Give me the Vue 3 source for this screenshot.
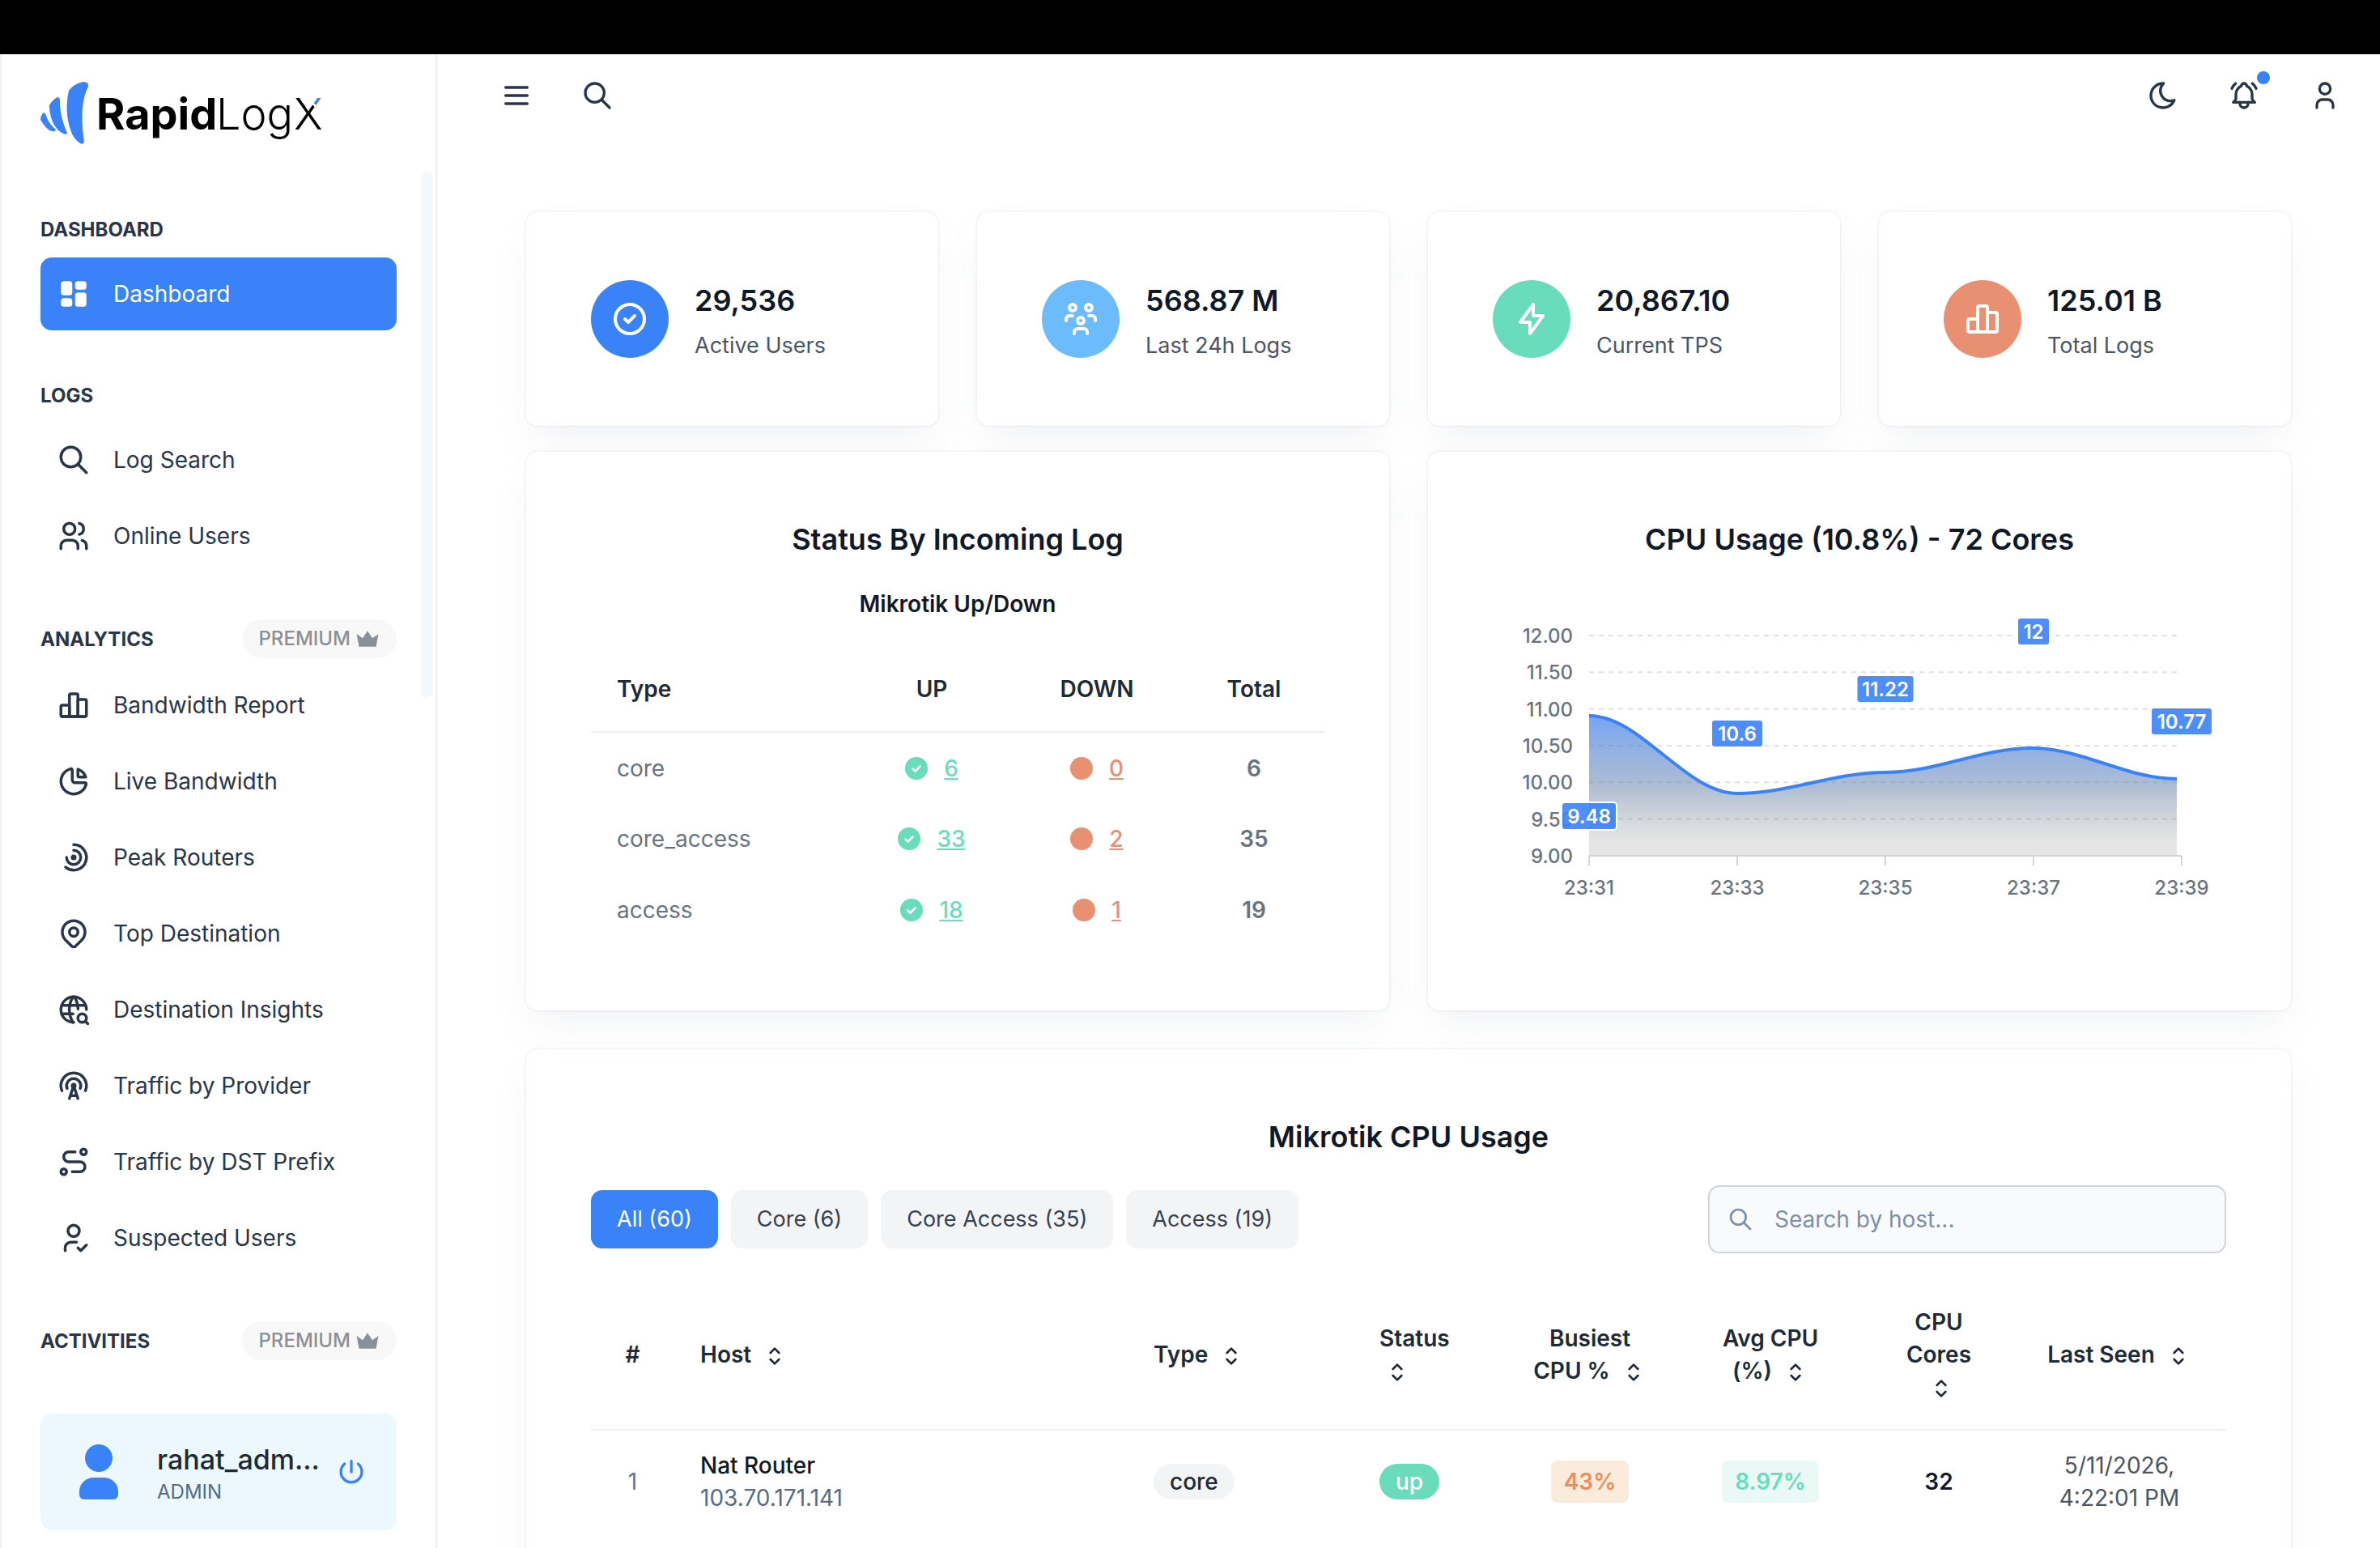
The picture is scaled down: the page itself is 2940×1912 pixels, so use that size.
<template>
  <div class="app">
    <div class="top-strip"></div>

    <div class="layout">
      <aside class="sidebar">
        <a href="#" class="logo" aria-label="RapidLogX">
          <svg width="360" height="84" viewBox="0 0 360 84">
            <defs>
              <linearGradient id="logo-x" gradientUnits="userSpaceOnUse" x1="316" y1="58" x2="348" y2="20">
                <stop offset="0.71" stop-color="#000" />
                <stop offset="0.71" stop-color="#fff" />
                <stop offset="0.77" stop-color="#fff" />
                <stop offset="0.77" stop-color="#3a82f7" />
              </linearGradient>
            </defs>
            <g fill="#3a82f7">
              <path d="M2 40Q4 37 6 39C9 49 14 55 19 59Q19 62 14 61C7 59 3 51 0 47Q0 43 2 40Z" />
              <path d="M11 29Q15 22 21 19Q24 19 24 24C24 39 28 52 33 63Q33 66 28 64C16 58 11 42 11 29Z" />
              <path d="M35 11Q40 3 53 0Q60 0 59 6C49 26 51 52 54 74Q53 78 49 76Q40 70 37 59C31 42 32 24 35 11Z" />
            </g>
            <text x="69" y="59" class="logo-bold">Rapid</text>
            <text x="217" y="59" class="logo-light">Log</text>
            <text x="313" y="59" class="logo-light" fill="url(#logo-x)">X</text>
          </svg>
        </a>

        <nav class="nav">
          <div v-for="group in groups" :key="group.title" class="nav-group">
            <div class="nav-heading">
              <span>{{ group.title }}</span>
              <span v-if="group.premium" class="premium">
                PREMIUM
                <svg width="36" height="36" viewBox="0 0 24 24">
                  <path d="M12 5.500l4 6l5-3.500l-2 10.500h-14l-2-10.500l5 3.500z" fill="currentColor" />
                </svg>
              </span>
            </div>
            <a
              v-for="item in group.items"
              :key="item.label"
              href="#"
              class="nav-item"
              :class="{ active: item.active }"
            >
              <svg class="nav-icon" :class="{ filled: item.icon === 'dashboard' }" viewBox="0 0 24 24">
                <path v-for="d in icons[item.icon]" :key="d" :d="d" />
              </svg>
              {{ item.label }}
            </a>
          </div>
          <div class="scroll-thumb"></div>
        </nav>

        <div class="user-card">
          <svg class="avatar" viewBox="0 0 48 68">
            <circle cx="24" cy="17" r="17" />
            <path d="M18 41h12a18 17 0 0 1 18 17v4a6 6 0 0 1-6 6h-36a6 6 0 0 1-6-6v-4a18 17 0 0 1 18-17z" />
          </svg>
          <div class="user-text">
            <div class="user-name">rahat_adm...</div>
            <div class="user-role">ADMIN</div>
          </div>
          <button type="button" class="icon-btn power" aria-label="Logout">
            <svg viewBox="0 0 24 24"><path v-for="d in icons.power" :key="d" :d="d" /></svg>
          </button>
        </div>
      </aside>

      <div class="page">
        <header class="header">
          <div class="header-side">
            <button v-for="name in ['menu', 'search']" :key="name" type="button" class="icon-btn" :aria-label="name">
              <svg viewBox="0 0 24 24"><path v-for="d in icons[name]" :key="d" :d="d" /></svg>
            </button>
          </div>
          <div class="header-side">
            <button v-for="name in ['moon', 'bell', 'user']" :key="name" type="button" class="icon-btn" :aria-label="name">
              <svg viewBox="0 0 24 24"><path v-for="d in icons[name]" :key="d" :d="d" /></svg>
              <span v-if="name === 'bell'" class="dot"></span>
            </button>
          </div>
        </header>

        <main class="content">
          <section class="stats">
            <div v-for="stat in stats" :key="stat.label" class="card stat">
              <div class="stat-icon" :class="stat.color">
                <svg viewBox="0 0 24 24"><path v-for="d in icons[stat.icon]" :key="d" :d="d" /></svg>
              </div>
              <div>
                <div class="stat-value">{{ stat.value }}</div>
                <div class="stat-label">{{ stat.label }}</div>
              </div>
            </div>
          </section>

          <section class="panels">
            <div class="card">
              <h2>Status By Incoming Log</h2>
              <h3>Mikrotik Up/Down</h3>
              <table class="status-table">
                <colgroup>
                  <col class="s-type" />
                  <col class="s-up" />
                  <col class="s-down" />
                  <col class="s-total" />
                </colgroup>
                <thead>
                  <tr>
                    <th class="left">Type</th>
                    <th>UP</th>
                    <th>DOWN</th>
                    <th>Total</th>
                  </tr>
                </thead>
                <tbody>
                  <tr v-for="row in statusRows" :key="row.type">
                    <td class="left">{{ row.type }}</td>
                    <td>
                      <span class="count up">
                        <svg width="28" height="28" viewBox="0 0 28 28">
                          <circle cx="14" cy="14" r="14" fill="currentColor" />
                          <path d="M9.500 14.500l3 3l6-6" fill="none" stroke="#fff" stroke-width="2.500" stroke-linecap="round" stroke-linejoin="round" />
                        </svg>
                        <a href="#">{{ row.up }}</a>
                      </span>
                    </td>
                    <td>
                      <span class="count down">
                        <svg width="28" height="28" viewBox="0 0 28 28">
                          <circle cx="14" cy="14" r="14" fill="currentColor" />
                        </svg>
                        <a href="#">{{ row.down }}</a>
                      </span>
                    </td>
                    <td class="total">{{ row.up + row.down }}</td>
                  </tr>
                </tbody>
              </table>
            </div>

            <div class="card">
              <h2>CPU Usage (10.8%) - 72 Cores</h2>
              <svg class="chart" viewBox="0 0 906 440">
                <defs>
                  <linearGradient id="area" gradientUnits="userSpaceOnUse" x1="0" y1="158" x2="0" y2="331">
                    <stop offset="0" stop-color="#3a7ff0" stop-opacity="0.7" />
                    <stop offset="0.5" stop-color="#6a86b0" stop-opacity="0.55" />
                    <stop offset="0.9" stop-color="#999" stop-opacity="0.25" />
                    <stop offset="1" stop-color="#999" stop-opacity="0.25" />
                  </linearGradient>
                </defs>
                <g v-for="(tick, i) in yTicks" :key="tick">
                  <line v-if="i < 6" x1="119" x2="847" :y1="59 + i * 45.3" :y2="59 + i * 45.3" class="grid" />
                  <text x="99" :y="68 + i * 45.3" text-anchor="end" class="axis-text">{{ tick }}</text>
                </g>
                <path :d="curve + 'V331H119Z'" fill="url(#area)" />
                <path :d="curve" class="curve" />
                <line x1="119" x2="851" y1="331" y2="331" class="axis" />
                <g v-for="(tick, i) in xTicks" :key="tick">
                  <line :x1="119 + i * 183" :x2="119 + i * 183" y1="331" y2="343" class="axis" />
                  <text :x="119 + i * 183" y="379" text-anchor="middle" class="axis-text">{{ tick }}</text>
                </g>
                <g v-for="p in points" :key="p.value">
                  <rect :x="p.x - p.w / 2" :y="p.y - 17" :width="p.w" height="34" rx="4" class="tag" />
                  <text :x="p.x" :y="p.y + 9" text-anchor="middle" class="tag-text">{{ p.value }}</text>
                </g>
              </svg>
            </div>
          </section>

          <section class="card">
            <h2>Mikrotik CPU Usage</h2>
            <div class="toolbar">
              <div class="tabs">
                <button
                  v-for="tab in tabs"
                  :key="tab"
                  type="button"
                  class="tab"
                  :class="{ active: tab === activeTab }"
                  @click="activeTab = tab"
                >
                  {{ tab }}
                </button>
              </div>
              <label class="host-search">
                <svg viewBox="0 0 24 24"><path v-for="d in icons.search" :key="d" :d="d" /></svg>
                <input v-model="host" type="text" placeholder="Search by host..." aria-label="Search by host" />
              </label>
            </div>

            <table class="cpu-table">
              <colgroup>
                <col v-for="col in columns" :key="col.label" :style="{ width: col.width + 'px' }" />
              </colgroup>
              <thead>
                <tr>
                  <th v-for="col in columns" :key="col.label" :class="{ left: col.left }">
                    {{ col.label }}
                    <svg v-if="col.label !== '#'" class="sort" viewBox="0 0 24 24">
                      <path d="M8 9l4-4l4 4" />
                      <path d="M16 15l-4 4l-4-4" />
                    </svg>
                  </th>
                </tr>
              </thead>
              <tbody>
                <tr>
                  <td>1</td>
                  <td class="left">
                    <div class="host-name">Nat Router</div>
                    <div class="host-ip">103.70.171.141</div>
                  </td>
                  <td class="left"><span class="pill gray">core</span></td>
                  <td class="left"><span class="pill green">up</span></td>
                  <td><span class="badge orange">43%</span></td>
                  <td><span class="badge mint">8.97%</span></td>
                  <td class="cores">32</td>
                  <td class="seen">5/11/2026, 4:22:01 PM</td>
                </tr>
              </tbody>
            </table>
          </section>
        </main>
      </div>
    </div>
  </div>
</template>

<script setup>
import { ref } from "vue";

const activeTab = ref("All (60)");
const host = ref("");

const icons = {
  menu: ["M4 6h16", "M4 12h16", "M4 18h16"],
  search: ["M3 10a7 7 0 1 0 14 0a7 7 0 1 0-14 0", "M21 21l-6-6"],
  moon: ["M12 3h.393a7.500 7.500 0 0 0 7.920 12.446a9 9 0 1 1-8.313-12.454z"],
  bell: [
    "M10 5a2 2 0 0 1 4 0a7 7 0 0 1 4 6v3a4 4 0 0 0 2 3h-16a4 4 0 0 0 2-3v-3a7 7 0 0 1 4-6",
    "M9 17v1a3 3 0 0 0 6 0v-1",
    "M21 6.727a11.050 11.050 0 0 0-2.794-3.727",
    "M3 6.727a11.050 11.050 0 0 1 2.792-3.727",
  ],
  user: ["M8 7a4 4 0 1 0 8 0a4 4 0 0 0-8 0", "M6 21v-2a4 4 0 0 1 4-4h4a4 4 0 0 1 4 4v2"],
  power: ["M7 6a7.750 7.750 0 1 0 10 0", "M12 4v8"],
  dashboard: [
    "M5 3h4a2 2 0 0 1 2 2v6a2 2 0 0 1-2 2h-4a2 2 0 0 1-2-2v-6a2 2 0 0 1 2-2z",
    "M5 15h4a2 2 0 0 1 2 2v2a2 2 0 0 1-2 2h-4a2 2 0 0 1-2-2v-2a2 2 0 0 1 2-2z",
    "M15 3h4a2 2 0 0 1 2 2v2a2 2 0 0 1-2 2h-4a2 2 0 0 1-2-2v-2a2 2 0 0 1 2-2z",
    "M15 11h4a2 2 0 0 1 2 2v6a2 2 0 0 1-2 2h-4a2 2 0 0 1-2-2v-6a2 2 0 0 1 2-2z",
  ],
  users: [
    "M5 7a4 4 0 1 0 8 0a4 4 0 1 0-8 0",
    "M3 21v-2a4 4 0 0 1 4-4h4a4 4 0 0 1 4 4v2",
    "M16 3.130a4 4 0 0 1 0 7.750",
    "M21 21v-2a4 4 0 0 0-3-3.850",
  ],
  bars: [
    "M3 13a1 1 0 0 1 1-1h4a1 1 0 0 1 1 1v6a1 1 0 0 1-1 1h-4a1 1 0 0 1-1-1z",
    "M15 9a1 1 0 0 1 1-1h4a1 1 0 0 1 1 1v10a1 1 0 0 1-1 1h-4a1 1 0 0 1-1-1z",
    "M9 5a1 1 0 0 1 1-1h4a1 1 0 0 1 1 1v14a1 1 0 0 1-1 1h-4a1 1 0 0 1-1-1z",
    "M4 20h16",
  ],
  pie: [
    "M10 3.200a9 9 0 1 0 10.800 10.800a1 1 0 0 0-1-1h-6.800a2 2 0 0 1-2-2v-7a.9 .9 0 0 0-1-.8",
    "M15 3.500a9 9 0 0 1 5.500 5.500h-4.500a1 1 0 0 1-1-1v-4.500",
  ],
  arcs: [
    "M11 12a1 1 0 1 0 2 0a1 1 0 1 0-2 0",
    "M7 12a5 5 0 1 0 5-5",
    "M6.290 18.957a9 9 0 1 0 5.710-15.957",
  ],
  pin: [
    "M9 11a3 3 0 1 0 6 0a3 3 0 0 0-6 0",
    "M17.657 16.657l-4.243 4.243a2 2 0 0 1-2.827 0l-4.244-4.243a8 8 0 1 1 11.314 0z",
  ],
  world: [
    "M21 12a9 9 0 1 0-9 9",
    "M3.600 9h16.800",
    "M3.600 15h7.900",
    "M11.500 3a17 17 0 0 0 0 18",
    "M12.500 3a16.984 16.984 0 0 1 2.574 8.620",
    "M15 18a3 3 0 1 0 6 0a3 3 0 1 0-6 0",
    "M20.200 20.200l1.800 1.800",
  ],
  tower: [
    "M11 12a1 1 0 1 0 2 0a1 1 0 1 0-2 0",
    "M16.616 13.924a5 5 0 1 0-9.230 0",
    "M20.307 15.469a9 9 0 1 0-16.615 0",
    "M9 21l3-9l3 9",
    "M10 19h4",
  ],
  route: [
    "M3 19a2 2 0 1 0 4 0a2 2 0 1 0-4 0",
    "M17 5a2 2 0 1 0 4 0a2 2 0 1 0-4 0",
    "M11 19h5.500a3.500 3.500 0 0 0 0-7h-8a3.500 3.500 0 0 1 0-7h4.500",
  ],
  suspect: [
    "M8 7a4 4 0 1 0 8 0a4 4 0 0 0-8 0",
    "M6 21v-2a4 4 0 0 1 4-4h4",
    "M15 19l2 2l4-4",
  ],
  check: ["M3 12a9 9 0 1 0 18 0a9 9 0 1 0-18 0", "M9 12l2 2l4-4"],
  group: [
    "M10 13a2 2 0 1 0 4 0a2 2 0 0 0-4 0",
    "M8 21v-1a2 2 0 0 1 2-2h4a2 2 0 0 1 2 2v1",
    "M15 5a2 2 0 1 0 4 0a2 2 0 0 0-4 0",
    "M17 10h2a2 2 0 0 1 2 2v1",
    "M5 5a2 2 0 1 0 4 0a2 2 0 0 0-4 0",
    "M3 13v-1a2 2 0 0 1 2-2h2",
  ],
  bolt: ["M13 3v7h6l-8 11v-7h-6l8-11"],
};

const groups = [
  { title: "DASHBOARD", items: [{ label: "Dashboard", icon: "dashboard", active: true }] },
  {
    title: "LOGS",
    items: [
      { label: "Log Search", icon: "search" },
      { label: "Online Users", icon: "users" },
    ],
  },
  {
    title: "ANALYTICS",
    premium: true,
    items: [
      { label: "Bandwidth Report", icon: "bars" },
      { label: "Live Bandwidth", icon: "pie" },
      { label: "Peak Routers", icon: "arcs" },
      { label: "Top Destination", icon: "pin" },
      { label: "Destination Insights", icon: "world" },
      { label: "Traffic by Provider", icon: "tower" },
      { label: "Traffic by DST Prefix", icon: "route" },
      { label: "Suspected Users", icon: "suspect" },
    ],
  },
  { title: "ACTIVITIES", premium: true, items: [] },
];

const stats = [
  { value: "29,536", label: "Active Users", icon: "check", color: "blue" },
  { value: "568.87 M", label: "Last 24h Logs", icon: "group", color: "sky" },
  { value: "20,867.10", label: "Current TPS", icon: "bolt", color: "teal" },
  { value: "125.01 B", label: "Total Logs", icon: "bars", color: "coral" },
];

const statusRows = [
  { type: "core", up: 6, down: 0 },
  { type: "core_access", up: 33, down: 2 },
  { type: "access", up: 18, down: 1 },
];

const yTicks = ["12.00", "11.50", "11.00", "10.50", "10.00", "9.50", "9.00"];
const xTicks = ["23:31", "23:33", "23:35", "23:37", "23:39"];
const curve =
  "M119 158C183 158 238 254 302 254C366 254 421 228 485 228C549 228 602 198 666 198C729 198 782 236 845 236";
const points = [
  { value: "9.48", x: 119, y: 282, w: 68 },
  { value: "10.6", x: 302, y: 180, w: 64 },
  { value: "11.22", x: 485, y: 125, w: 71 },
  { value: "12", x: 668, y: 54, w: 40 },
  { value: "10.77", x: 851, y: 165, w: 76 },
];

const tabs = ["All (60)", "Core (6)", "Core Access (35)", "Access (19)"];

const columns = [
  { label: "#", width: 103 },
  { label: "Host", width: 560, left: true },
  { label: "Type", width: 279, left: true },
  { label: "Status", width: 186, left: true },
  { label: "Busiest CPU %", width: 212 },
  { label: "Avg CPU (%)", width: 234 },
  { label: "CPU Cores", width: 182 },
  { label: "Last Seen", width: 264 },
];
</script>

<style>
body {
  background: #fff;
  overflow: hidden;
}
</style>

<style scoped>
.app {
  height: 100vh;
  display: flex;
  flex-direction: column;
  font-family: Inter, "Liberation Sans", sans-serif;
  font-size: 28px;
  line-height: 40px;
  color: #2a3547;
}

.app * {
  box-sizing: border-box;
}

a {
  color: inherit;
  text-decoration: none;
}

button,
input {
  font: inherit;
  color: inherit;
  border: none;
  background: none;
  padding: 0;
}

button {
  cursor: pointer;
}

svg {
  display: block;
  flex: none;
}

.top-strip {
  height: 67px;
  background: #000;
  flex: none;
}

.layout {
  flex: 1;
  min-height: 0;
  display: flex;
}

/* sidebar */
.sidebar {
  width: 540px;
  flex: none;
  display: flex;
  flex-direction: column;
  border-left: 2px solid #ebf1f6;
  border-right: 2px solid #ebf1f6;
  padding: 0 48px 22px;
}

.logo {
  height: 145px;
  padding-top: 34px;
  flex: none;
}

.logo-bold {
  font-size: 54px;
  font-weight: 700;
  fill: #000;
}

.logo-light {
  font-size: 54px;
  font-weight: 300;
}

.nav {
  position: relative;
  flex: 1;
  min-height: 0;
  padding-top: 49px;
}

.nav-group + .nav-group {
  margin-top: 58px;
}

.nav-heading {
  min-height: 44px;
  margin-bottom: 13px;
  display: flex;
  align-items: center;
  justify-content: space-between;
  font-size: 24px;
  font-weight: 700;
}

.nav-heading span:first-child {
  padding-top: 2px;
}

.premium {
  height: 48px;
  padding: 0 18px 0 20px;
  display: flex;
  align-items: center;
  gap: 3px;
  border-radius: 24px;
  background: #f8f8f8;
  color: #8a9099;
  font-weight: 500;
}

.nav-item {
  height: 90px;
  padding: 0 20px;
  display: flex;
  align-items: center;
  gap: 28px;
  border-radius: 14px;
}

.nav-item + .nav-item {
  margin-top: 4px;
}

.nav-item.active {
  background: #3a82f7;
  color: #fff;
}

.nav-icon {
  width: 42px;
  height: 42px;
  fill: none;
  stroke: currentColor;
  stroke-width: 2;
  stroke-linecap: round;
  stroke-linejoin: round;
}

.nav-icon.filled {
  fill: currentColor;
  stroke: none;
}

.scroll-thumb {
  position: absolute;
  top: 0;
  right: -44px;
  width: 14px;
  height: 650px;
  border-radius: 7px;
  background: #f3f8fc;
}

.user-card {
  height: 144px;
  padding: 0 36px 0 48px;
  display: flex;
  align-items: center;
  border-radius: 14px;
  background: #ecf7fe;
}

.avatar {
  width: 48px;
  height: 68px;
  fill: #3a82f7;
}

.user-text {
  flex: 1;
  margin-left: 48px;
  padding-top: 10px;
}

.user-name {
  font-size: 34px;
  font-weight: 500;
  white-space: nowrap;
  color: #202936;
}

.user-role {
  font-size: 24px;
  color: #5a6a85;
}

/* header */
.page {
  flex: 1;
  min-width: 0;
  overflow: hidden;
}

.header {
  height: 102px;
  padding: 0 48px 0 78px;
  display: flex;
  align-items: center;
  justify-content: space-between;
}

.header-side {
  display: flex;
  gap: 60px;
}

.icon-btn {
  position: relative;
  width: 40px;
  height: 40px;
}

.icon-btn svg {
  width: 40px;
  height: 40px;
  fill: none;
  stroke: currentColor;
  stroke-width: 2;
  stroke-linecap: round;
  stroke-linejoin: round;
}

.power {
  color: #3a82f7;
}

.dot {
  position: absolute;
  top: -10px;
  right: -12px;
  width: 16px;
  height: 16px;
  border-radius: 50%;
  background: #3a82f7;
}

/* content */
.content {
  padding: 93px 110px 48px;
}

.card {
  padding: 80px;
  border-radius: 14px;
  background: #fff;
  box-shadow: 0 0 3px rgba(145, 158, 171, 0.3), 0 24px 48px -8px rgba(145, 158, 171, 0.12);
}

h2,
h3 {
  margin: 0 0 32px;
  text-align: center;
  color: #111827;
}

h2 {
  font-size: 36px;
  line-height: 56px;
  font-weight: 600;
}

h3 {
  font-size: 28px;
  line-height: 40px;
  font-weight: 600;
}

.stats {
  display: grid;
  grid-template-columns: repeat(4, 1fr);
  gap: 48px;
  margin-bottom: 32px;
}

.stat {
  height: 264px;
  display: flex;
  align-items: center;
  gap: 32px;
}

.stat-icon {
  width: 96px;
  height: 96px;
  flex: none;
  display: flex;
  align-items: center;
  justify-content: center;
  border-radius: 50%;
}

.stat-icon svg {
  width: 48px;
  height: 48px;
  fill: none;
  stroke: #fff;
  stroke-width: 2;
  stroke-linecap: round;
  stroke-linejoin: round;
}

.blue {
  background: #3a82f7;
}

.sky {
  background: #6cbbfa;
}

.teal {
  background: #69dcbc;
}

.coral {
  background: #e98f72;
}

.stat-value {
  font-size: 36px;
  line-height: 60px;
  font-weight: 600;
  white-space: nowrap;
  color: #111827;
}

.stat-label {
  margin-top: 6px;
  font-size: 27px;
  white-space: nowrap;
  color: #4b5563;
}

.panels {
  display: grid;
  grid-template-columns: 1fr 1fr;
  gap: 48px;
  margin-bottom: 48px;
}

table {
  width: 100%;
  table-layout: fixed;
  border-collapse: collapse;
  text-align: center;
}

th {
  padding: 33px 32px 32px;
  border-bottom: 2px solid #ebf1f6;
  font-weight: 600;
  color: #202936;
}

.left {
  text-align: left;
}

.status-table .s-type {
  width: 324px;
}

.status-table .s-up {
  width: 194px;
}

.status-table .s-down {
  width: 214px;
}

.status-table .s-total {
  width: 174px;
}

.status-table td {
  height: 88px;
  padding: 0 32px;
  color: #6b7280;
}

.status-table td.total {
  font-weight: 600;
}

.count {
  display: flex;
  align-items: center;
  justify-content: center;
  gap: 20px;
  font-weight: 500;
}

.count a {
  text-decoration: underline;
}

.count.up {
  color: #69dcbc;
}

.count.down {
  color: #e98f72;
}

/* chart */
.chart {
  width: 100%;
  overflow: visible;
}

.grid {
  stroke: #e0e0e0;
  stroke-width: 2;
  stroke-dasharray: 6 6;
}

.axis {
  stroke: #d4d4d4;
  stroke-width: 2;
}

.axis-text {
  font-size: 24px;
  font-weight: 500;
  fill: #6b7280;
}

.curve {
  fill: none;
  stroke: #3a82f7;
  stroke-width: 4;
}

.tag {
  fill: #3a82f7;
  fill-opacity: 0.9;
  stroke: #fff;
  stroke-width: 2;
}

.tag-text {
  font-size: 24px;
  font-weight: 600;
  fill: #fff;
}

/* cpu usage table */
.toolbar {
  display: flex;
  align-items: center;
  justify-content: space-between;
  margin-bottom: 32px;
}

.tabs {
  display: flex;
  gap: 16px;
}

.tab {
  height: 72px;
  padding: 0 32px;
  border-radius: 14px;
  background: #f3f4f6;
  font-size: 27px;
  color: #374151;
}

.tab.active {
  background: #3a82f7;
  color: #fff;
}

.host-search {
  width: 640px;
  height: 84px;
  padding: 0 24px 0 22px;
  display: flex;
  align-items: center;
  gap: 26px;
  border: 2px solid #cfd4dd;
  border-radius: 14px;
  background: #f9fafb;
  color: #7c8fac;
}

.host-search svg {
  width: 32px;
  height: 32px;
  fill: none;
  stroke: currentColor;
  stroke-width: 2;
  stroke-linecap: round;
}

.host-search input {
  flex: 1;
  min-width: 0;
  outline: none;
}

.host-search input::placeholder {
  color: #7c8fac;
  opacity: 1;
}

.sort {
  display: inline-block;
  width: 32px;
  height: 32px;
  margin-left: 6px;
  vertical-align: middle;
  fill: none;
  stroke: currentColor;
  stroke-width: 2;
  stroke-linecap: round;
  stroke-linejoin: round;
}

.cpu-table td {
  height: 126px;
  padding: 0 32px;
  color: #6b7280;
}

.host-name {
  font-weight: 500;
  color: #111827;
}

.host-ip {
  color: #5a6a85;
}

.pill {
  display: inline-block;
  padding: 2px 20px;
  border-radius: 22px;
  font-weight: 500;
}

.pill.gray {
  background: #f3f4f6;
  color: #202936;
}

.pill.green {
  background: #69dcbc;
  color: #fff;
}

.badge {
  display: inline-block;
  padding: 6px 16px;
  border-radius: 8px;
  font-weight: 600;
}

.badge.orange {
  background: #faebdc;
  color: #f08c56;
}

.badge.mint {
  background: #eaf9f5;
  color: #69dcbc;
}

.cpu-table td.cores {
  font-weight: 600;
  color: #111827;
}

.cpu-table td.seen {
  color: #4b5563;
}
</style>
